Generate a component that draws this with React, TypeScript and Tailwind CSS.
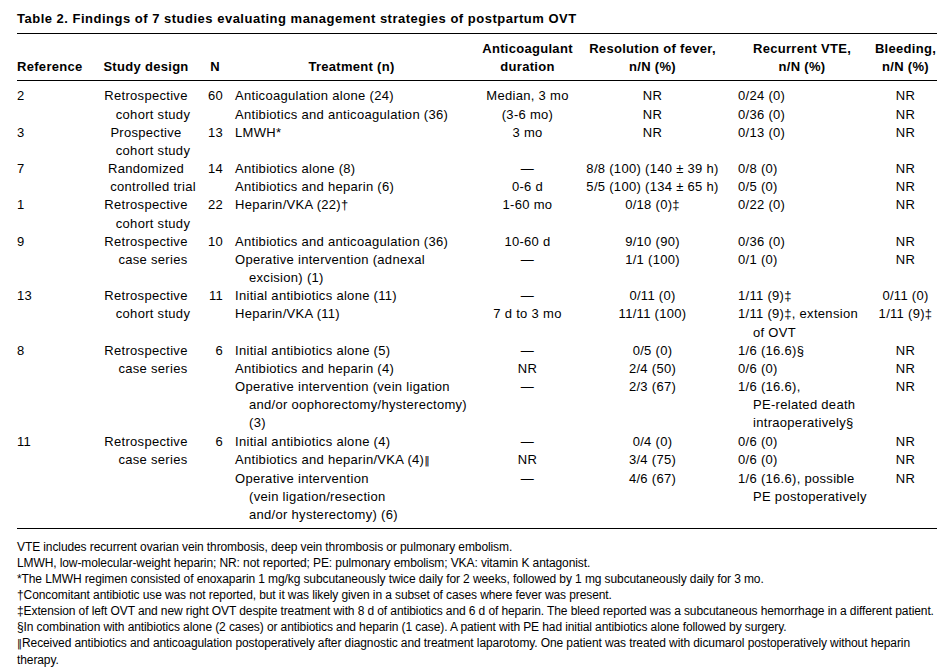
type Row = { t: string[]; d: string; f: string; v: string[]; b: string };
type Study = { ref: string; design: [string, string]; n: string; rows: Row[] };

const studies: Study[] = [
  {
    ref: "2",
    design: ["Retrospective", "cohort study"],
    n: "60",
    rows: [
      { t: ["Anticoagulation alone (24)"], d: "Median, 3 mo", f: "NR", v: ["0/24 (0)"], b: "NR" },
      { t: ["Antibiotics and anticoagulation (36)"], d: "(3-6 mo)", f: "NR", v: ["0/36 (0)"], b: "NR" },
    ],
  },
  {
    ref: "3",
    design: ["Prospective", "cohort study"],
    n: "13",
    rows: [{ t: ["LMWH*"], d: "3 mo", f: "NR", v: ["0/13 (0)"], b: "NR" }],
  },
  {
    ref: "7",
    design: ["Randomized", "controlled trial"],
    n: "14",
    rows: [
      { t: ["Antibiotics alone (8)"], d: "—", f: "8/8 (100) (140 ± 39 h)", v: ["0/8 (0)"], b: "NR" },
      { t: ["Antibiotics and heparin (6)"], d: "0-6 d", f: "5/5 (100) (134 ± 65 h)", v: ["0/5 (0)"], b: "NR" },
    ],
  },
  {
    ref: "1",
    design: ["Retrospective", "cohort study"],
    n: "22",
    rows: [{ t: ["Heparin/VKA (22)†"], d: "1-60 mo", f: "0/18 (0)‡", v: ["0/22 (0)"], b: "NR" }],
  },
  {
    ref: "9",
    design: ["Retrospective", "case series"],
    n: "10",
    rows: [
      { t: ["Antibiotics and anticoagulation (36)"], d: "10-60 d", f: "9/10 (90)", v: ["0/36 (0)"], b: "NR" },
      { t: ["Operative intervention (adnexal", "excision) (1)"], d: "—", f: "1/1 (100)", v: ["0/1 (0)"], b: "NR" },
    ],
  },
  {
    ref: "13",
    design: ["Retrospective", "cohort study"],
    n: "11",
    rows: [
      { t: ["Initial antibiotics alone (11)"], d: "—", f: "0/11 (0)", v: ["1/11 (9)‡"], b: "0/11 (0)" },
      { t: ["Heparin/VKA (11)"], d: "7 d to 3 mo", f: "11/11 (100)", v: ["1/11 (9)‡, extension", "of OVT"], b: "1/11 (9)‡" },
    ],
  },
  {
    ref: "8",
    design: ["Retrospective", "case series"],
    n: "6",
    rows: [
      { t: ["Initial antibiotics alone (5)"], d: "—", f: "0/5 (0)", v: ["1/6 (16.6)§"], b: "NR" },
      { t: ["Antibiotics and heparin (4)"], d: "NR", f: "2/4 (50)", v: ["0/6 (0)"], b: "NR" },
      {
        t: ["Operative intervention (vein ligation", "and/or oophorectomy/hysterectomy)", "(3)"],
        d: "—",
        f: "2/3 (67)",
        v: ["1/6 (16.6),", "PE-related death", "intraoperatively§"],
        b: "NR",
      },
    ],
  },
  {
    ref: "11",
    design: ["Retrospective", "case series"],
    n: "6",
    rows: [
      { t: ["Initial antibiotics alone (4)"], d: "—", f: "0/4 (0)", v: ["0/6 (0)"], b: "NR" },
      { t: ["Antibiotics and heparin/VKA (4)‖"], d: "NR", f: "3/4 (75)", v: ["0/6 (0)"], b: "NR" },
      {
        t: ["Operative intervention", "(vein ligation/resection", "and/or hysterectomy) (6)"],
        d: "—",
        f: "4/6 (67)",
        v: ["1/6 (16.6), possible", "PE postoperatively"],
        b: "NR",
      },
    ],
  },
];

const footnotes = [
  "VTE includes recurrent ovarian vein thrombosis, deep vein thrombosis or pulmonary embolism.",
  "LMWH, low-molecular-weight heparin; NR: not reported; PE: pulmonary embolism; VKA: vitamin K antagonist.",
  "*The LMWH regimen consisted of enoxaparin 1 mg/kg subcutaneously twice daily for 2 weeks, followed by 1 mg subcutaneously daily for 3 mo.",
  "†Concomitant antibiotic use was not reported, but it was likely given in a subset of cases where fever was present.",
  "‡Extension of left OVT and new right OVT despite treatment with 8 d of antibiotics and 6 d of heparin. The bleed reported was a subcutaneous hemorrhage in a different patient.",
  "§In combination with antibiotics alone (2 cases) or antibiotics and heparin (1 case). A patient with PE had initial antibiotics alone followed by surgery.",
];

// the double bar marker renders heavy in the fallback font, so pin it
const Marked = ({ text }: { text: string }) => {
  const parts = text.split("‖");
  if (parts.length === 1) return <>{text}</>;
  return (
    <>
      {parts[0]}
      <span className="font-['DejaVu_Sans'] font-normal tracking-normal text-[11px]">‖</span>
      {parts[1]}
    </>
  );
};

const Hanging = ({ lines, indent }: { lines: string[]; indent: string }) => (
  <div>
    {lines.map((l, i) => (
      <div key={i} className={i > 0 ? indent : ""}>
        <Marked text={l} />
      </div>
    ))}
  </div>
);

export default function App() {
  return (
    <div className="w-[949px] h-[672px] overflow-hidden bg-white text-black font-['Liberation_Sans',Arial,sans-serif]">
      <div className="w-[920px] ml-[17px] pt-[10px]">
        <h2 className="text-[13px] leading-[18px] font-bold tracking-[0.5px] mb-[5px] whitespace-nowrap">
          Table 2. Findings of 7 studies evaluating management strategies of postpartum OVT
        </h2>

        <div className="border-y border-black text-[13px] leading-[18.17px] tracking-[0.3px]">
          {/* header */}
          <div className="flex items-end font-bold border-b border-black pt-[6px] pb-[4px]">
            <div className="w-[78px]">Reference</div>
            <div className="w-[102px] text-center">Study design</div>
            <div className="w-[26px] text-right pr-[3px]">N</div>
            <div className="w-[257px] text-center">Treatment (n)</div>
            <div className="w-[95px] text-center">
              Anticoagulant
              <br />
              duration
            </div>
            <div className="w-[155px] text-center">
              Resolution of fever,
              <br />
              n/N (%)
            </div>
            <div className="w-[144px] text-center">
              Recurrent VTE,
              <br />
              n/N (%)
            </div>
            <div className="w-[63px] text-center">
              Bleeding,
              <br />
              n/N (%)
            </div>
          </div>

          {/* body */}
          <div className="pt-[6px] pb-[4px]">
            {studies.map((s) => (
              <div key={s.ref} className="flex">
                <div className="w-[78px] shrink-0">{s.ref}</div>
                <div className="w-[102px] shrink-0 text-center">
                  <div>{s.design[0]}</div>
                  <div className="pl-[14px]">{s.design[1]}</div>
                </div>
                <div className="w-[26px] shrink-0 text-right">{s.n}</div>
                <div className="flex flex-col">
                  {s.rows.map((r, i) => (
                    <div key={i} className="flex">
                      <div className="w-[257px] pl-[12px]">
                        <Hanging lines={r.t} indent="pl-[14px]" />
                      </div>
                      <div className="w-[95px] text-center">{r.d}</div>
                      <div className="w-[155px] text-center whitespace-nowrap">{r.f}</div>
                      <div className="w-[144px] pl-[8px] whitespace-nowrap">
                        <Hanging lines={r.v} indent="pl-[15px]" />
                      </div>
                      <div className="w-[63px] text-center whitespace-nowrap">{r.b}</div>
                    </div>
                  ))}
                </div>
              </div>
            ))}
          </div>
        </div>

        <div className="pt-[10px] text-[12px] leading-[16px] tracking-[-0.1px]">
          {footnotes.map((f, i) => (
            <p key={i} className="whitespace-nowrap">
              {f}
            </p>
          ))}
          <p className="whitespace-nowrap">
            <span className="font-['DejaVu_Sans'] tracking-normal text-[10px]">‖</span>Received antibiotics and
            anticoagulation postoperatively after diagnostic and treatment laparotomy. One patient was treated with
            dicumarol postoperatively without heparin
            <br />
            therapy.
          </p>
        </div>
      </div>
    </div>
  );
}
